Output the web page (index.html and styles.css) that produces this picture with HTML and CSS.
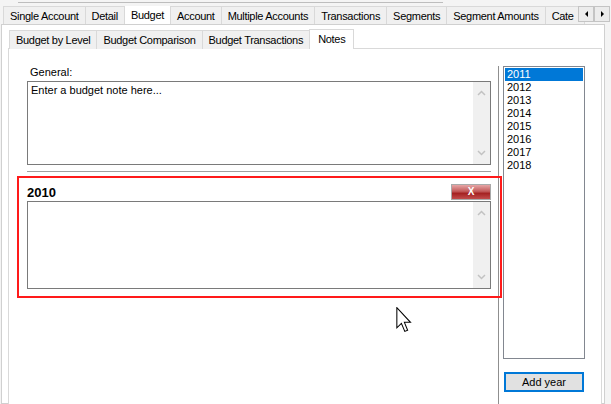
FILE: index.html
```html
<!DOCTYPE html>
<html lang="en">
<head>
    <meta charset="UTF-8">
    <title>Budget Notes</title>
    <link rel="stylesheet" href="styles.css">
</head>
<body>
    <div class="topbar"><div class="topbar-line"></div></div>

    <div class="tabstrip">
        <div class="tab">Single Account</div>
        <div class="tab">Detail</div>
        <div class="tab active">Budget</div>
        <div class="tab">Account</div>
        <div class="tab">Multiple Accounts</div>
        <div class="tab">Transactions</div>
        <div class="tab">Segments</div>
        <div class="tab">Segment Amounts</div>
        <div class="tab tab-last">Cate</div>
        <div class="tab-scroll">
            <div class="scroll-btn"><span class="tri-left"></span></div>
            <div class="scroll-btn"><span class="tri-right"></span></div>
        </div>
    </div>

    <div class="page">
        <div class="subtabs">
            <div class="subtab">Budget by Level</div>
            <div class="subtab">Budget Comparison</div>
            <div class="subtab">Budget Transactions</div>
            <div class="subtab active">Notes</div>
        </div>

        <div class="subpanel">
            <div class="notes-col">
                <div class="general">
                    <div class="label">General:</div>
                    <div class="memo memo-general">
                        <div class="memo-text">Enter a budget note here...</div>
                        <div class="vscroll">
                            <svg width="9" height="6" viewBox="0 0 9 6"><polyline points="1,5 4.5,1.5 8,5" fill="none" stroke="#c2c2c2" stroke-width="1.5"/></svg>
                            <svg width="9" height="6" viewBox="0 0 9 6"><polyline points="1,1 4.5,4.5 8,1" fill="none" stroke="#c2c2c2" stroke-width="1.5"/></svg>
                        </div>
                    </div>
                    <div class="divider"></div>
                </div>

                <div class="year-note">
                    <div class="year-head">
                        <span class="year-title">2010</span>
                        <div class="btn-delete">X</div>
                    </div>
                    <div class="memo memo-year">
                        <div class="memo-text"></div>
                        <div class="vscroll">
                            <svg width="9" height="6" viewBox="0 0 9 6"><polyline points="1,5 4.5,1.5 8,5" fill="none" stroke="#c2c2c2" stroke-width="1.5"/></svg>
                            <svg width="9" height="6" viewBox="0 0 9 6"><polyline points="1,1 4.5,4.5 8,1" fill="none" stroke="#c2c2c2" stroke-width="1.5"/></svg>
                        </div>
                    </div>
                </div>
            </div>

            <div class="years-col">
                <ul class="year-list">
                    <li class="selected">2011</li>
                    <li>2012</li>
                    <li>2013</li>
                    <li>2014</li>
                    <li>2015</li>
                    <li>2016</li>
                    <li>2017</li>
                    <li>2018</li>
                </ul>
                <div class="btn-add">Add year</div>
            </div>
        </div>
    </div>

    <!-- mouse pointer -->
    <svg class="cursor" width="16" height="26" viewBox="0 0 12 20">
        <path d="M0.5,0.5 L0.5,16 L4,12.6 L6.6,18.8 L8.8,17.9 L6.3,11.8 L11,11.8 Z" fill="#fff" stroke="#000" stroke-width="0.8" stroke-linejoin="miter"/>
    </svg>
</body>
</html>
```

FILE: styles.css
```css
body {
    margin: 0;
    width: 611px;
    height: 404px;
    overflow: hidden;
    background-color: #f4f4f4;
    color: #000;
    font-family: "Liberation Sans", Arial, sans-serif;
    font-size: 11px;
    position: relative;
}

.topbar {
    height: 6px;
    padding-top: 2px;
    box-sizing: border-box;
}
.topbar-line {
    margin-left: 18px;
    width: 425px;
    height: 1px;
    background-color: #bdbdbd;
}

/* outer tabs */
.tabstrip {
    display: flex;
    height: 18px;
    padding-left: 3px;
    position: relative;
    z-index: 1;
    overflow: hidden;
}
.tab {
    flex-shrink: 0;
    height: 18px;
    box-sizing: border-box;
    padding: 3px 6px 0 6px;
    margin-right: -1px;
    border: 1px solid #d9d9d9;
    border-bottom: none;
    background-color: #f0f0f0;
    white-space: nowrap;
    letter-spacing: -0.3px;
}
.tab.active {
    height: 21px;
    margin-top: -2px;
    padding-top: 4px;
    background-color: #fff;
    position: relative;
    z-index: 2;
}
.tab-last {
    width: 40px;
    overflow: hidden;
}
.tab-scroll {
    position: absolute;
    left: 578px;
    top: 0;
    display: flex;
    z-index: 3;
}
.scroll-btn {
    width: 16px;
    height: 16px;
    box-sizing: border-box;
    border: 1px solid #c4c4c4;
    background-color: #ececec;
    display: flex;
    align-items: center;
    justify-content: center;
}
.tri-left {
    border-top: 3px solid transparent;
    border-bottom: 3px solid transparent;
    border-right: 3px solid #000;
}
.tri-right {
    border-top: 3px solid transparent;
    border-bottom: 3px solid transparent;
    border-left: 3px solid #000;
}

/* outer page */
.page {
    margin-left: 1px;
    width: 604px;
    height: 380px;
    box-sizing: border-box;
    border: 1px solid #d0d0d0;
    background-color: #fff;
    padding: 5px 2px 0 6px;
}

/* inner tabs */
.subtabs {
    display: flex;
    height: 18px;
    padding-left: 1px;
    position: relative;
    z-index: 1;
}
.subtab {
    height: 19px;
    box-sizing: border-box;
    padding: 3px 6px 0 6px;
    margin-right: -1px;
    border: 1px solid #d9d9d9;
    border-bottom: none;
    background-color: #f0f0f0;
    white-space: nowrap;
    letter-spacing: -0.3px;
}
.subtab.active {
    height: 20px;
    margin-top: -1px;
    padding: 3px 8px 0 8px;
    background-color: #fff;
}

.subpanel {
    display: flex;
    height: 356px;
    box-sizing: border-box;
    border: 1px solid #d9d9d9;
    border-bottom: none;
    background-color: #fff;
}

/* notes column */
.notes-col {
    width: 490px;
    flex-shrink: 0;
    box-sizing: border-box;
    margin-top: 17px;
    padding-left: 8px;
    border-right: 1px solid #8f8f8f;
}
.general {
    padding-left: 10px;
}
.label {
    height: 13px;
    line-height: 13px;
    padding-left: 3px;
    margin-bottom: 2px;
}
.memo {
    display: flex;
    width: 464px;
    box-sizing: border-box;
    border: 1px solid #7a7a7a;
    background-color: #fff;
}
.memo-general {
    height: 84px;
}
.memo-year {
    height: 88px;
    margin-top: 1px;
}
.memo-text {
    flex: 1;
    padding: 2px 3px;
    line-height: 13px;
}
.vscroll {
    width: 17px;
    background-color: #f0f0f0;
    display: flex;
    flex-direction: column;
    justify-content: space-between;
    align-items: center;
    padding: 8px 0 8px 0;
}
.divider {
    width: 464px;
    height: 1px;
    margin-top: 6px;
    background-color: #a0a0a0;
}

.year-note {
    margin-top: 4px;
    margin-right: -4px;
    height: 122px;
    box-sizing: border-box;
    border: 2px solid #ff1a1a;
    padding: 6px 0 0 8px;
}
.year-head {
    display: flex;
    justify-content: space-between;
    align-items: flex-end;
    width: 464px;
    height: 16px;
}
.year-title {
    font-size: 13px;
    font-weight: bold;
    line-height: 14px;
}
.btn-delete {
    width: 40px;
    height: 16px;
    box-sizing: border-box;
    border: 1px solid #a9a9a9;
    background: linear-gradient(#e6a5a5 0%, #c35b5b 45%, #a52222 60%, #c24c4c 100%);
    color: #fff;
    font-weight: bold;
    font-size: 10px;
    line-height: 14px;
    text-align: center;
}

/* years column */
.years-col {
    padding-top: 17px;
    padding-left: 4px;
}
.year-list {
    list-style-type: none;
    margin: 0;
    padding: 1px;
    width: 82px;
    height: 293px;
    box-sizing: border-box;
    border: 1px solid #828790;
}
.year-list li {
    height: 13px;
    line-height: 13px;
    padding-left: 2px;
}
.year-list li.selected {
    background-color: #0078d7;
    color: #fff;
}
.btn-add {
    margin: 13px 0 0 1px;
    width: 80px;
    height: 20px;
    box-sizing: border-box;
    border: 2px solid #0078d7;
    background-color: #e1e1e1;
    text-align: center;
    line-height: 16px;
}

.cursor {
    position: absolute;
    left: 396px;
    top: 307px;
}
```
